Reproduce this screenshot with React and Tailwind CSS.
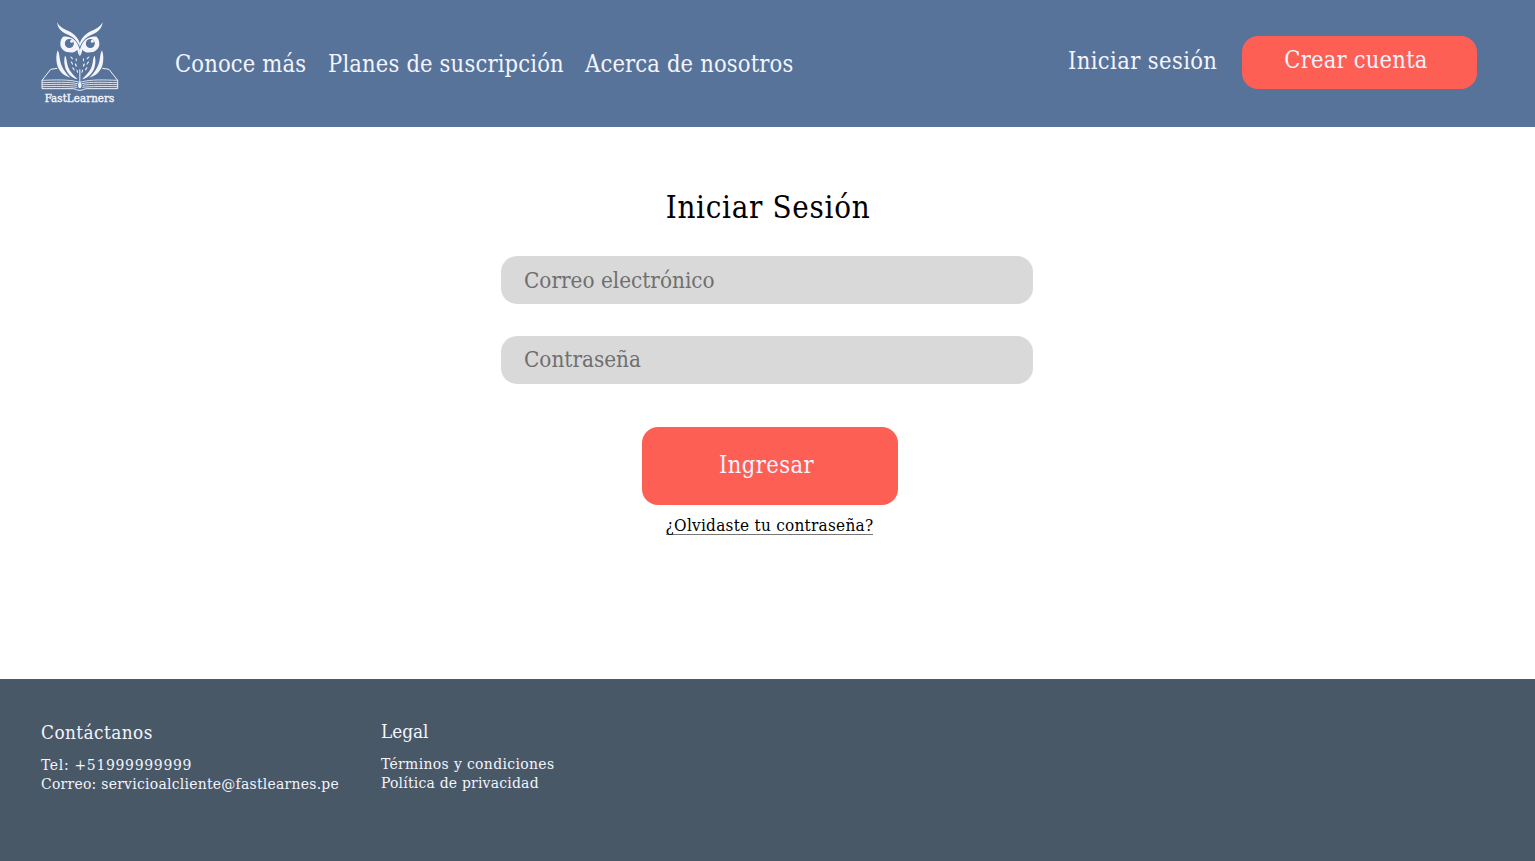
function Half() {
  return (
    <g>
      <path d="M81 37C88 49 97 56 110 61C130 69 144 82 149.500 100L149.500 111C142 92 129 80 109 72C93 65 84 56 81 37Z" />
      <path
        fillRule="evenodd"
        d="M99 80C109 78 120 80 130 87C140 94 145 106 149.500 119L149.500 139C146 134 143 128 142 119C136 127 126 128 116 127C101 125 91 115 91 101C91 92 94 85 99 80ZM118 87A13.500 13.500 0 1 0 118 114A13.500 13.500 0 1 0 118 87Z"
      />
      <path d="M83 121C88 129 88 139 90 150C94 171 105 187 121 203C101 198 86 184 81 163C78 149 78 134 83 121Z" />
      <path d="M105 137C110 141 109 151 112 163C116 181 128 194 143 208C125 203 110 190 105 170C102 158 102 147 105 137Z" />
      <path d="M121 139C125 140 129 144 129 148C125 147 122 144 121 139Z" />
      <path d="M138 144C141 147 141 151 139 155C137 152 136 148 138 144Z" />
      <path d="M122 154C127 156 129 160 129 165C125 162 123 159 122 154Z" />
      <path d="M135 160C139 162 141 166 140 171C136 169 134 165 135 160Z" />
      <path d="M127 171C131 173 134 177 134 182C130 180 127 176 127 171Z" />
      <path d="M140 178C143 181 145 185 144 190C141 187 139 183 140 178Z" />
      <g fill="none" stroke="currentColor" strokeWidth="2.500">
        <path d="M82 175L62 178L36 211L36 236" strokeWidth="3" />
        <path d="M36 211C75 210 115 207 149.500 217" />
        <path d="M36 218C75 217 118 215 143 221" />
        <path d="M36 224C75 223 118 222 141 226" />
        <path d="M36 230C75 229 118 229 142 232" />
        <path d="M36 236L130 236C138 237 140 241 149.500 241" strokeWidth="3" />
      </g>
    </g>
  );
}

function Logo() {
  return (
    <a href="#" className="flex w-20 flex-col items-center text-[#f3f4fd]">
      <svg viewBox="30 30 240 216" className="h-[72px] w-20" fill="currentColor" aria-hidden="true">
        <Half />
        <g transform="translate(299 0) scale(-1 1)">
          <Half />
        </g>
        <circle cx="125" cy="94" r="4.500" />
        <circle cx="187" cy="94" r="4.500" />
        <path d="M148 178H151V216H148Z" />
        <ellipse cx="149.500" cy="226" rx="5" ry="9" />
      </svg>
      <span className="-mt-px ml-[-1px] text-[11.4px] leading-[15px] tracking-[0.1px] whitespace-nowrap [-webkit-text-stroke:0.4px_currentColor]">
        FastLearners
      </span>
    </a>
  );
}

export default function App() {
  return (
    <div className="flex h-[861px] w-full flex-col bg-white font-['DejaVu_Serif_Condensed','DejaVu_Serif',serif] text-black">
      <header className="flex h-[127px] shrink-0 items-start justify-between bg-[#577399] pr-[58px] pl-10 text-[23.5px] whitespace-nowrap text-[#f3f4fd]">
        <div className="flex">
          <div className="pt-5">
            <Logo />
          </div>
          <nav className="flex pt-11 pl-[55px] leading-10">
            <a href="#" className="w-[153px] tracking-[0.13px]">Conoce más</a>
            <a href="#" className="w-[257px] tracking-[0.16px]">Planes de suscripción</a>
            <a href="#" className="tracking-[0.15px]">Acerca de nosotros</a>
          </nav>
        </div>
        <div className="flex pt-9">
          <a href="#" className="mt-[5px] w-[174px] leading-10 tracking-[0.38px]">Iniciar sesión</a>
          <button className="h-[53px] w-[235px] rounded-[16px] bg-[#fe5f55] pr-[7px] pb-[5px] leading-10 tracking-[0.2px]">
            Crear cuenta
          </button>
        </div>
      </header>

      <main className="flex flex-1 flex-col items-center">
        <h1 className="mt-[60px] ml-px text-[31px] leading-10 tracking-[0.7px]">Iniciar Sesión</h1>
        <form className="mt-[29px] mr-px flex flex-col items-center text-[22.3px]">
          <input
            type="email"
            placeholder="Correo electrónico"
            className="h-12 w-[532px] rounded-[16px] bg-[#d9d9d9] px-[23px] placeholder:text-[#6f6f6f]"
          />
          <input
            type="password"
            placeholder="Contraseña"
            className="mt-8 h-12 w-[532px] rounded-[16px] bg-[#d9d9d9] px-[23px] pb-0.5 placeholder:text-[#6f6f6f]"
          />
          <button
            type="button"
            className="mt-[42.500px] ml-[6px] h-[78px] w-64 rounded-[16px] bg-[#fe5f55] pr-[7px] text-[23.5px] tracking-[0.4px] text-[#f3f4fd]"
          >
            Ingresar
          </button>
        </form>
        <a href="#" className="mt-[10px] ml-[4px] h-5 border-b border-[#777] text-[17px] leading-[20px] tracking-[0.27px]">
          ¿Olvidaste tu contraseña?
        </a>
      </main>

      <footer className="flex h-[182px] shrink-0 bg-[#495867] pl-[41px] text-[15.5px] leading-[19.400px] whitespace-nowrap text-[#f3f4fd]">
        <section className="w-[340px] pt-[44px]">
          <h2 className="mb-[13px] text-[18.8px] leading-5 tracking-[0.45px]">Contáctanos</h2>
          <p className="tracking-[0.7px]">Tel: +51999999999</p>
          <p className="tracking-[0.26px]">Correo: servicioalcliente@fastlearnes.pe</p>
        </section>
        <section className="pt-[43px]">
          <h2 className="mb-[13px] text-[18.8px] leading-5">Legal</h2>
          <p className="tracking-[0.36px]">Términos y condiciones</p>
          <p className="tracking-[0.22px]">Política de privacidad</p>
        </section>
      </footer>
    </div>
  );
}
